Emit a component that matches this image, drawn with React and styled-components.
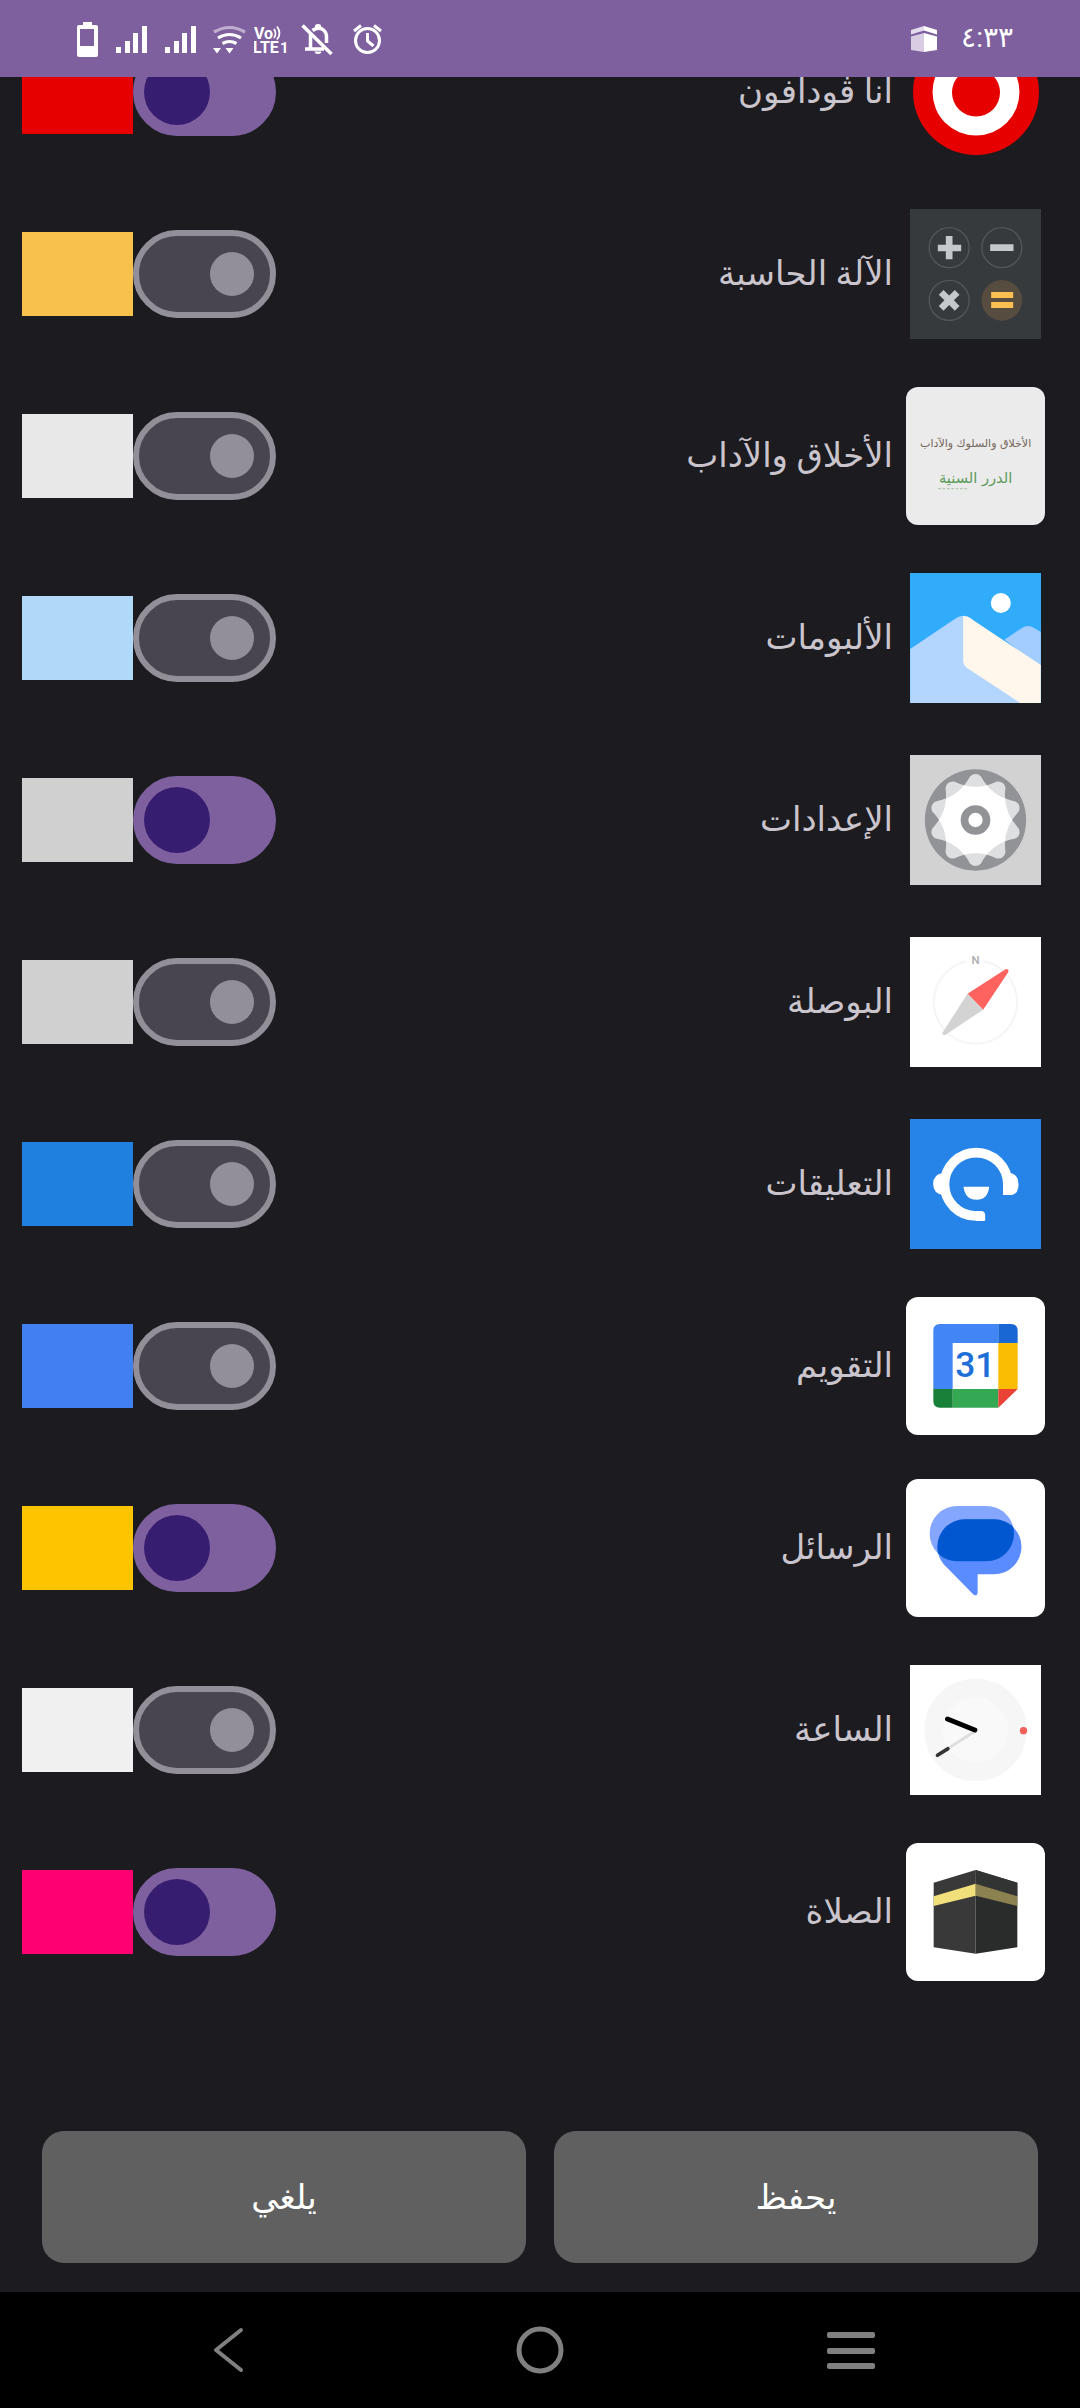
import React, { useState } from 'react';
import styled, { createGlobalStyle } from 'styled-components';

const GlobalStyle = createGlobalStyle`
  * {
    box-sizing: border-box;
  }

  body {
    margin: 0;
    background: #1c1b1f;
    font-family: Roboto, 'DejaVu Sans', sans-serif;
  }
`;

const Screen = styled.div`
  display: flex;
  flex-direction: column;
  height: 100vh;
  background: #1c1b1f;
  color: #cac5cd;
`;

const StatusBar = styled.header`
  display: flex;
  flex: none;
  align-items: center;
  justify-content: space-between;
  height: 77px;
  padding: 0 67px 0 72px;
  background: #7e609f;
  color: #fff;
`;

const StatusGroup = styled.div`
  display: flex;
  align-items: center;
  gap: ${({ $gap }) => $gap}px;
`;

const Clock = styled.time`
  padding-bottom: 2px;
  font-size: 28px;
  line-height: 32px;
`;

// column-reverse keeps the list scrolled to its end
const Scroller = styled.main`
  display: flex;
  flex: 1;
  flex-direction: column-reverse;
  min-height: 0;
  overflow-y: auto;
  scrollbar-width: none;
`;

const AppList = styled.ul`
  margin: 0;
  padding: 0 35px 99px 22px;
  list-style: none;
`;

const AppRow = styled.li`
  display: flex;
  align-items: center;
  height: 182px;
`;

const IconSlot = styled.div`
  display: flex;
  flex: none;
  justify-content: center;
  width: 139px;
`;

const AppIcon = styled.svg`
  display: block;
  width: ${({ $rounded }) => ($rounded ? 139 : 131)}px;
  height: ${({ $rounded }) => ($rounded ? 138 : 130)}px;
  border-radius: ${({ $rounded }) => ($rounded ? 12 : 0)}px;
  background: ${({ $bg }) => $bg};
`;

const AppName = styled.label`
  flex: 1;
  margin-inline-start: 13px;
  padding-bottom: 2px;
  font-size: 34px;
  line-height: 48px;
`;

const Switch = styled.input`
  display: grid;
  flex: none;
  align-content: center;
  justify-content: start;
  width: 143px;
  height: 88px;
  margin: 0;
  padding: 0 16px;
  border: 6px solid #938f99;
  border-radius: 44px;
  background: #49454f;
  appearance: none;
  cursor: pointer;

  &::before {
    content: '';
    width: 44px;
    height: 44px;
    border-radius: 50%;
    background: #938f99;
  }

  &:checked {
    justify-content: end;
    padding: 0 5px;
    border-color: #7e609f;
    background: #7e609f;
  }

  &:checked::before {
    width: 66px;
    height: 66px;
    background: #371d70;
  }
`;

const Swatch = styled.button`
  flex: none;
  width: 111px;
  height: 84px;
  padding: 0;
  border: none;
  background: ${({ $color }) => $color};
  cursor: pointer;
`;

const Actions = styled.footer`
  display: flex;
  flex: none;
  gap: 28px;
  padding: 29px 42px;
`;

const ActionButton = styled.button`
  flex: 1;
  height: 132px;
  border: none;
  border-radius: 22px;
  background: #606060;
  color: #fff;
  font-family: inherit;
  font-size: 34px;
  line-height: 48px;
  cursor: pointer;
`;

const NavBar = styled.nav`
  display: grid;
  flex: none;
  grid-template-columns: repeat(3, 1fr);
  height: 116px;
  padding: 0 73px;
  background: #000;
`;

const NavButton = styled.button`
  display: flex;
  align-items: center;
  justify-content: center;
  padding: 0;
  border: none;
  background: none;
  color: #808080;
  cursor: pointer;
`;

const BatteryIcon = () => (
  <svg width="31" height="44" viewBox="72 16 31 44" fill="#fff">
    <path
      fillRule="evenodd"
      d="M83 21h9v3h4q2 0 2 2v28q0 2-2 2H79q-2 0-2-2V26q0-2 2-2h4zM80 28v17h14V28z"
    />
  </svg>
);

const SignalIcon = () => (
  <svg width="41" height="44" viewBox="111 16 41 44" fill="#fff">
    <path d="M116 46h5v6h-5zM125 40h5v12h-5zM133 32h5v20h-5zM142 25h5v27h-5z" />
  </svg>
);

const WifiIcon = () => (
  <svg width="37" height="44" viewBox="209 16 37 44" fill="none" stroke="#fff" strokeWidth="3.2">
    <path d="M214 31q15.500-9 31 0" stroke="#bfaed0" />
    <path d="M218 37q11.500-7 23 0" />
    <path d="M222.500 42.500q7-4 14 0" />
    <path d="M213 47h8l-4 5.500zM225.500 47h8l-4 5.500z" fill="#fff" stroke="none" />
  </svg>
);

const VolteIcon = () => (
  <svg width="34" height="44" viewBox="254 16 34 44" fill="#fff" fontFamily="Roboto" fontWeight="700">
    <text x="254" y="38" fontSize="16">Vo</text>
    <path
      d="M274 28q3 4.500 0 9M277 25.500q5 7 0 13"
      fill="none"
      stroke="#fff"
      strokeWidth="1.800"
    />
    <text x="253" y="52" fontSize="16">LTE</text>
    <text x="280" y="52" fontSize="15">1</text>
  </svg>
);

const BellOffIcon = () => (
  <svg width="42" height="44" viewBox="296 16 42 44" fill="none" stroke="#fff" strokeWidth="3.500">
    <path d="M302.500 24.500l29 28.500" />
    <path d="M310.500 33v14M305 48h19M312.500 29.500q6-4.500 11-.5 3 2.500 3 7v6" />
    <path d="M315 27v-2q0-2 3-2t3 2v2zM314.500 50.500h7q-.5 2.500-3.500 2.500t-3.500-2.500z" fill="#fff" stroke="none" />
  </svg>
);

const AlarmIcon = () => (
  <svg width="43" height="44" viewBox="346 16 43 44" fill="none" stroke="#fff" strokeWidth="3">
    <circle cx="367.500" cy="39.500" r="12" />
    <path d="M367.500 32v8l6 5M354 30l7-5.500M381 30l-7-5.500" />
  </svg>
);

const KaabaStatusIcon = () => (
  <svg width="26" height="26" viewBox="0 0 26 26">
    <path d="M0 4l13-4v4.500L0 8.500z" fill="#e4dcec" />
    <path d="M26 4L13 0v4.500l13 4z" fill="#fff" />
    <path d="M0 10.500L13 7v19L0 24z" fill="#d8cde3" />
    <path d="M26 10.500L13 7v19l13-2z" fill="#fff" />
  </svg>
);

const VodafoneIcon = () => (
  <AppIcon $rounded $bg="transparent" viewBox="0 0 139 138">
    <circle cx="70" cy="69" r="63" fill="#e60000" />
    <circle cx="70" cy="69" r="43.500" fill="#fff" />
    <circle cx="70" cy="69.500" r="24" fill="#e60000" />
  </AppIcon>
);

const CalculatorIcon = () => (
  <AppIcon $bg="#373a3d" viewBox="0 0 392 390">
    <g fill="none" stroke="#53575a" strokeWidth="4">
      <circle cx="117" cy="116" r="60" />
      <circle cx="275" cy="116" r="60" />
      <circle cx="117" cy="274" r="60" />
    </g>
    <circle cx="275" cy="274" r="61" fill="#564c40" />
    <path d="M83 107h24V81h20v26h26v20h-26v24h-20v-24H83zM240 106h70v20h-70z" fill="#c5c8ca" />
    <path d="M83 264h24v-24h20v24h24v20h-24v24h-20v-24H83z" fill="#c5c8ca" transform="rotate(45 117 274)" />
    <path d="M243 249h66v18h-66zM243 279h66v18h-66z" fill="#fcc050" />
  </AppIcon>
);

const EthicsIcon = () => (
  <AppIcon $rounded $bg="#ebebeb" viewBox="0 0 415 414" fontFamily="'DejaVu Sans'" textAnchor="middle">
    <text x="208" y="180" fontSize="33" fill="#75665a">الأخلاق والسلوك والآداب</text>
    <text x="208" y="288" fontSize="44" fill="#5c9a5c">الدرر السنية</text>
    <path d="M96 305h90" stroke="#b5c4b3" strokeWidth="4" strokeDasharray="8 5" />
  </AppIcon>
);

const AlbumsIcon = () => (
  <AppIcon $bg="#31acfb" viewBox="0 0 392 390">
    <circle cx="272" cy="90" r="30" fill="#fff" />
    <path d="M283 200l52-35q18-12 37 0l20 12v110z" fill="#a3cdff" />
    <path d="M0 228l135-91q25-17 50 0l150 253H0z" fill="#b2d6ff" />
    <path d="M159 129q13 0 26 10l207 137v114h-62L172 286q-13-9-13-24z" fill="#fff7eb" />
  </AppIcon>
);

const polar = (deg, r) => {
  const a = (deg * Math.PI) / 180;
  return `${(196 + r * Math.sin(a)).toFixed(1)} ${(195 - r * Math.cos(a)).toFixed(1)}`;
};

// five rounded lobes joined by concave sides
const lobes = start =>
  [0, 1, 2, 3, 4]
    .map(i => {
      const a = start + i * 72;
      return `${i ? 'L' : 'M'}${polar(a - 7, 132)} Q${polar(a, 145)} ${polar(a + 7, 132)} Q${polar(a + 36, 84)} ${polar(a + 65, 132)}`;
    })
    .join(' ') + 'Z';

const SettingsIcon = () => (
  <AppIcon $bg="#d2d2d3" viewBox="0 0 392 390">
    <clipPath id="gear">
      <path d={lobes(36)} />
    </clipPath>
    <circle cx="196" cy="195" r="152" fill="#929396" />
    <path d={lobes(0)} fill="#dedfe1" />
    <path d={lobes(36)} fill="#dedfe1" />
    <path d={lobes(0)} fill="#fff" clipPath="url(#gear)" />
    <circle cx="196" cy="195" r="33" fill="#fff" stroke="#929396" strokeWidth="23" />
  </AppIcon>
);

const CompassIcon = () => (
  <AppIcon $bg="#fff" viewBox="0 0 392 390">
    <path d="M222 73a125 125 0 1 1-52 0" fill="none" stroke="#f5f5f5" strokeWidth="6" />
    <text x="196" y="81" fontFamily="Roboto" fontSize="34" fontWeight="500" fill="#ababab" textAnchor="middle">N</text>
    <path d="M172 170l114-73q10-3 9 7l-76 114z" fill="#ff6360" />
    <path d="M172 170L97 287q-2 9 8 7l114-76z" fill="#d3d3d3" />
  </AppIcon>
);

const FeedbackIcon = () => (
  <AppIcon $bg="#2684e8" viewBox="0 0 392 390">
    <path d="M212 291h-14a95 95 0 1 1 95-95v31" fill="none" stroke="#fff" strokeWidth="29" />
    <path d="M198 276h14q13 0 13 13v13q0 4-4 4h-23z" fill="#fff" />
    <path d="M100 162q-31 3-31 33t31 33h14v-66zM279 162h20q26 4 26 33 0 33-26 33h-20zM160 203h77q-4 39-38 39t-39-39z" fill="#fff" />
  </AppIcon>
);

const CalendarIcon = () => (
  <AppIcon $rounded $bg="#fff" viewBox="0 0 415 414">
    <path d="M101 81h175v57H139v138H81V101q0-20 20-20z" fill="#4285f4" />
    <path d="M276 81h38q20 0 20 20v37h-58z" fill="#1967d2" />
    <path d="M276 138h58v138h-58z" fill="#fbbc04" />
    <path d="M139 276h137v56H139z" fill="#34a853" />
    <path d="M81 276h58v56h-38q-20 0-20-20z" fill="#188038" />
    <path d="M276 276h58l-58 56z" fill="#ea4335" />
    <text x="207" y="241" fontFamily="Roboto" fontSize="106" fontWeight="500" fill="#1f70d6" textAnchor="middle">31</text>
  </AppIcon>
);

const MessagesIcon = () => (
  <AppIcon $rounded $bg="#fff" viewBox="0 0 415 414">
    <clipPath id="bubble">
      <rect x="93" y="121" width="253" height="165" rx="82" />
    </clipPath>
    <rect x="70" y="81" width="253" height="166" rx="83" fill="#84a6ff" />
    <path d="M176 121h87a82 82 0 0 1 0 165h-49v55q-2 12-12 6l-90-91q-19-24-19-52a83 83 0 0 1 83-83z" fill="#5b8cff" />
    <rect x="70" y="81" width="253" height="166" rx="83" fill="#0057d0" clipPath="url(#bubble)" />
  </AppIcon>
);

const ClockIcon = () => (
  <AppIcon $bg="#fff" viewBox="0 0 392 390">
    <circle cx="196" cy="195" r="154" fill="#f6f6f6" />
    <circle cx="196" cy="195" r="98" fill="#f9f9f9" />
    <g strokeLinecap="round">
      <path d="M194 199l-79 51" stroke="#dedede" strokeWidth="9" />
      <path d="M113 251l-31 20" stroke="#333" strokeWidth="11" />
      <path d="M112 162l82 33" stroke="#000" strokeWidth="15" />
    </g>
    <circle cx="340" cy="197" r="11" fill="#ee6059" />
  </AppIcon>
);

const PrayerIcon = () => (
  <AppIcon $rounded $bg="#fff" viewBox="0 0 415 414">
    <path d="M82 119l126-38v251L82 313z" fill="#393939" />
    <path d="M333 119L208 81v251l125-19z" fill="#2a2c2c" />
    <path d="M333 119L208 81v41l125 38z" fill="#323333" />
    <path d="M82 160l126-38v36L82 189z" fill="#f0df7a" />
    <path d="M333 160l-125-38v36l125 31z" fill="#8c8150" />
  </AppIcon>
);

const apps = [
  { id: 'vodafone', name: 'أنا ڤودافون', color: '#e60000', on: true, Icon: VodafoneIcon },
  { id: 'calculator', name: 'الآلة الحاسبة', color: '#f8c14b', on: false, Icon: CalculatorIcon },
  { id: 'ethics', name: 'الأخلاق والآداب', color: '#e8e8e8', on: false, Icon: EthicsIcon },
  { id: 'albums', name: 'الألبومات', color: '#b0d8f8', on: false, Icon: AlbumsIcon },
  { id: 'settings', name: 'الإعدادات', color: '#d0d0d0', on: true, Icon: SettingsIcon },
  { id: 'compass', name: 'البوصلة', color: '#d0d0d0', on: false, Icon: CompassIcon },
  { id: 'feedback', name: 'التعليقات', color: '#2080e0', on: false, Icon: FeedbackIcon },
  { id: 'calendar', name: 'التقويم', color: '#4080f0', on: false, Icon: CalendarIcon },
  { id: 'messages', name: 'الرسائل', color: '#ffc400', on: true, Icon: MessagesIcon },
  { id: 'clock', name: 'الساعة', color: '#f0f0f0', on: false, Icon: ClockIcon },
  { id: 'prayer', name: 'الصلاة', color: '#ff0070', on: true, Icon: PrayerIcon },
];

const App = () => {
  const [enabled, setEnabled] = useState(() =>
    Object.fromEntries(apps.map(app => [app.id, app.on]))
  );

  const toggle = id => setEnabled(prev => ({ ...prev, [id]: !prev[id] }));

  return (
    <Screen dir="rtl" lang="ar">
      <GlobalStyle />
      <StatusBar dir="ltr">
        <StatusGroup $gap={8}>
          <BatteryIcon />
          <SignalIcon />
          <SignalIcon />
          <WifiIcon />
          <VolteIcon />
          <BellOffIcon />
          <AlarmIcon />
        </StatusGroup>
        <StatusGroup $gap={24}>
          <KaabaStatusIcon />
          <Clock>٤:٣٣</Clock>
        </StatusGroup>
      </StatusBar>
      <Scroller>
        <AppList>
          {apps.map(({ id, name, color, Icon }) => (
            <AppRow key={id}>
              <IconSlot>
                <Icon />
              </IconSlot>
              <AppName htmlFor={id}>{name}</AppName>
              <Switch
                id={id}
                type="checkbox"
                role="switch"
                checked={enabled[id]}
                onChange={() => toggle(id)}
              />
              <Swatch type="button" $color={color} aria-label={`لون ${name}`} />
            </AppRow>
          ))}
        </AppList>
      </Scroller>
      <Actions>
        <ActionButton type="button">يحفظ</ActionButton>
        <ActionButton type="button">يلغي</ActionButton>
      </Actions>
      <NavBar dir="ltr">
        <NavButton type="button" aria-label="رجوع">
          <svg width="32" height="48" viewBox="0 0 32 48" fill="none" stroke="currentColor" strokeWidth="4" strokeLinecap="round" strokeLinejoin="round">
            <path d="M28 4L3 24l25 20" />
          </svg>
        </NavButton>
        <NavButton type="button" aria-label="الشاشة الرئيسية">
          <svg width="48" height="48" viewBox="0 0 48 48" fill="none" stroke="currentColor" strokeWidth="5">
            <circle cx="24" cy="24" r="21" />
          </svg>
        </NavButton>
        <NavButton type="button" aria-label="التطبيقات الأخيرة">
          <svg width="48" height="48" viewBox="0 0 48 48" fill="currentColor">
            <rect y="6" width="48" height="6" rx="2" />
            <rect y="22" width="48" height="6" rx="2" />
            <rect y="37" width="48" height="6" rx="2" />
          </svg>
        </NavButton>
      </NavBar>
    </Screen>
  );
};

export default App;
